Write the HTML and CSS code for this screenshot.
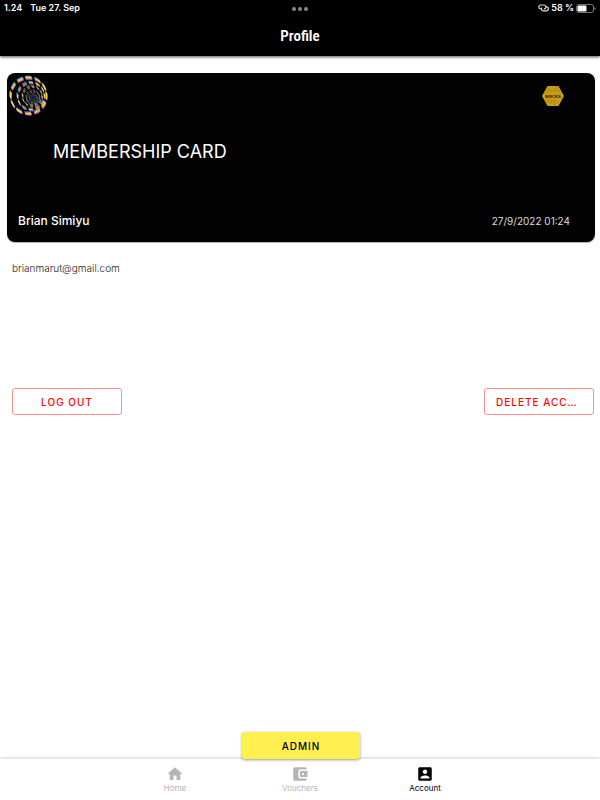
FILE: index.html
```
<!DOCTYPE html>
<html lang="en">

<head>
  <meta charset="utf-8">
  <meta name="viewport" content="width=device-width, initial-scale=1">
  <title>Profile</title>
  <link rel="stylesheet" href="styles.css">
</head>

<body>
  <header class="top">
    <div class="status">
      <div class="status-left">
        <span>1.24</span>
        <span>Tue 27. Sep</span>
      </div>
      <div class="dots"><i></i><i></i><i></i></div>
      <div class="status-right">
        <svg width="11" height="8" viewBox="0 0 11 8" fill="none" stroke="#ddd" stroke-width="1.2">
          <path d="M4 5H2.800a2 2 0 0 1 0-4H6a2 2 0 0 1 1.500 3.300Q7 5 5.800 5" />
          <path d="M7.800 2.800h.6a2 2 0 0 1 0 4H5.300a2 2 0 0 1-1.500-3.200" />
        </svg>
        <span>58 %</span>
        <svg class="battery" width="20" height="9" viewBox="0 0 20 9">
          <rect x="0.500" y="0.500" width="17" height="8" rx="2.500" fill="none" stroke="#777" />
          <rect x="1.500" y="1.500" width="9" height="6" rx="1.200" fill="#fff" />
          <path d="M18.500 3v3q1.300-.5 1.300-1.500T18.500 3z" fill="#777" />
        </svg>
      </div>
    </div>
    <h1>Profile</h1>
  </header>

  <main>
    <section class="card">
      <div class="card-logos">
        <svg width="42" height="42" viewBox="0 0 42 42" fill="none">
          <defs>
            <g id="rings">
              <circle cx="20.500" cy="20.500" r="18" stroke-width="1.400" stroke-dasharray="6.400 3.020" transform="rotate(-100 20.500 20.500)" />
              <circle cx="23" cy="21" r="13.500" stroke-width="1" stroke-dasharray="4.400 2.660" transform="rotate(-100 23 21)" />
              <circle cx="24.300" cy="21.800" r="9.800" stroke-width=".8" stroke-dasharray="3 2.130" transform="rotate(-95 24 21.500)" />
              <circle cx="25" cy="22.500" r="6.600" stroke-width=".6" stroke-dasharray="2 1.450" />
              <circle cx="25.300" cy="23" r="4" stroke-width=".5" stroke-dasharray="1.200 .9" />
            </g>
          </defs>
          <use href="#rings" stroke="#2f9df5" x="-0.500" y="-1.200" />
          <use href="#rings" stroke="#e46fc0" x="0.500" y="1.200" />
          <use href="#rings" stroke="#ffd92e" />
          <circle cx="25.500" cy="23.500" r="4" fill="#26385c" opacity=".65" />
        </svg>
        <svg class="hex" width="24" height="22" viewBox="0 0 24 22">
          <path d="M6.500 1h11L23 11l-5.500 10h-11L1 11z" fill="#c99c1e" />
          <path d="M7 3l4 4M16 2l-3 5M4 9l4-4M20 8l-4-3M6 17l3-3M12 15l2 5M17 18l-3-3M9 19l2-4" stroke="#8f6d13" stroke-width=".6" />
          <text x="12" y="13" text-anchor="middle">BRICKS</text>
        </svg>
      </div>
      <h2>MEMBERSHIP CARD</h2>
      <div class="card-bottom">
        <span class="name">Brian Simiyu</span>
        <time>27/9/2022 01:24</time>
      </div>
    </section>

    <p class="email">brianmarut@gmail.com</p>

    <div class="actions">
      <button type="button" class="outlined">LOG OUT</button>
      <button type="button" class="outlined">DELETE ACCOUNT</button>
    </div>

    <button type="button" class="admin">ADMIN</button>
  </main>

  <nav class="tabs">
    <a href="#home">
      <svg width="18" height="18" viewBox="0 0 24 24"><path d="M10 20v-6h4v6h5v-8h3L12 3 2 12h3v8z" /></svg>
      <span>Home</span>
    </a>
    <a href="#vouchers">
      <svg width="18" height="18" viewBox="0 0 24 24"><path d="M21 18v1c0 1.100-.9 2-2 2H5c-1.110 0-2-.9-2-2V5c0-1.100.89-2 2-2h14c1.100 0 2 .9 2 2v1h-9c-1.110 0-2 .9-2 2v8c0 1.100.89 2 2 2h9zm-9-2h10V8H12v8zm4-2.500c-.83 0-1.500-.67-1.500-1.500s.67-1.500 1.500-1.500 1.500.67 1.500 1.500-.67 1.500-1.500 1.500z" /></svg>
      <span>Vouchers</span>
    </a>
    <a href="#account" class="selected">
      <svg width="18" height="18" viewBox="0 0 24 24"><path d="M3 5v14c0 1.100.89 2 2 2h14c1.100 0 2-.9 2-2V5c0-1.100-.9-2-2-2H5c-1.110 0-2 .9-2 2zm12 4c0 1.660-1.340 3-3 3s-3-1.340-3-3 1.340-3 3-3 3 1.340 3 3zm-9 8c0-2 4-3.100 6-3.100s6 1.100 6 3.100v1H6v-1z" /></svg>
      <span>Account</span>
    </a>
  </nav>
</body>

</html>
```

FILE: styles.css
```
* {
  box-sizing: border-box;
}

body {
  margin: 0;
  min-height: 100vh;
  display: flex;
  flex-direction: column;
  background: #fff;
  font-family: Inter, "Liberation Sans", sans-serif;
}

.top {
  background: #000;
  color: #fff;
  height: 56px;
  box-shadow: 0 1px 3px rgba(0, 0, 0, 0.7);
}

.status {
  display: grid;
  grid-template-columns: 1fr auto 1fr;
  align-items: center;
  height: 16px;
  padding: 0 4px;
  font-size: 9px;
  line-height: 14px;
  font-weight: 600;
}

.status-left {
  display: flex;
  gap: 8px;
}

.status-right {
  display: flex;
  justify-content: flex-end;
  align-items: center;
  gap: 2px;
}

.dots {
  display: flex;
  gap: 2px;
  padding-top: 2px;
}

.dots i {
  width: 4px;
  height: 4px;
  border-radius: 50%;
  background: #888;
}

h1 {
  margin: 8px 0 0;
  text-align: center;
  font: 600 15px/24px "Liberation Sans Narrow", "Roboto Condensed", "Open Sans Condensed", Roboto, sans-serif;
}

main {
  flex: 1;
  display: flex;
  flex-direction: column;
  padding: 17px 5px 0 7px;
}

.card {
  height: 169px;
  display: flex;
  flex-direction: column;
  background: #020202;
  color: #fff;
  border-radius: 8px;
  box-shadow: 0 1px 1px rgba(0, 0, 0, 0.3);
}

.card-logos {
  display: flex;
  justify-content: space-between;
  align-items: center;
  padding: 2px 30px 0 1px;
}

.hex text {
  font: 700 4px "Liberation Sans", sans-serif;
  fill: #2b2005;
}

h2 {
  margin: 20px 0 0 46px;
  font-size: 18px;
  line-height: 30px;
  font-weight: 400;
}

.card-bottom {
  display: flex;
  justify-content: space-between;
  align-items: center;
  margin-top: auto;
  padding: 0 25px 12px 11px;
  line-height: 18px;
}

.name {
  font-size: 12px;
  font-weight: 500;
}

time {
  font-size: 10px;
  color: #ddd;
}

.email {
  margin: 17px 5px 0;
  font-size: 10px;
  line-height: 18px;
  font-weight: 300;
  color: #222;
}

.actions {
  display: flex;
  justify-content: space-between;
  margin: 111px 1px 0 5px;
}

button {
  font-family: inherit;
  font-size: 10px;
  font-weight: 500;
  letter-spacing: 1px;
  border-radius: 3px;
  cursor: pointer;
}

.outlined {
  width: 110px;
  height: 27px;
  padding: 0 11px;
  background: #fff;
  border: 1px solid #ff8c8c;
  color: #f00;
  overflow: hidden;
  white-space: nowrap;
  text-overflow: ellipsis;
}

.admin {
  width: 118px;
  height: 27px;
  margin: auto auto 0;
  background: #fff050;
  border: 0;
  color: #000;
  box-shadow: 0 1px 3px rgba(0, 0, 0, 0.4);
  position: relative;
}

.tabs {
  display: flex;
  justify-content: center;
  height: 41px;
  background: #fff;
  box-shadow: 0 0 4px rgba(0, 0, 0, 0.3);
}

.tabs a {
  width: 125px;
  padding-top: 6px;
  display: flex;
  flex-direction: column;
  align-items: center;
  font-size: 8px;
  line-height: 10px;
  color: #b5b5b5;
  text-decoration: none;
}

.tabs svg {
  fill: currentColor;
}

.tabs a.selected {
  color: #000;
}
```
